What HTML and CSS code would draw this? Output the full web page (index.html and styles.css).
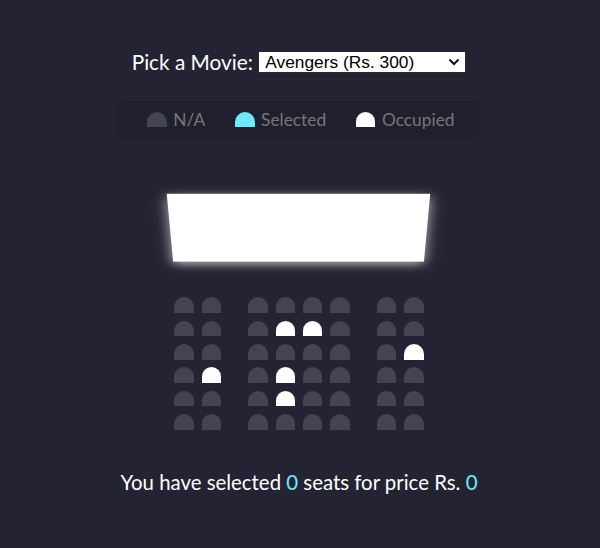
FILE: index.html
```html
<!DOCTYPE html>
<html lang="en">
<head>
<meta charset="UTF-8">
<title>Movie Seat Booking</title>
<link rel="stylesheet" href="styles.css">
</head>
<body>
  <div class="movie-container">
    <label for="movie">Pick a Movie:</label>
    <span class="select-wrap">
      <select id="movie">
        <option value="300">Avengers (Rs. 300)</option>
        <option value="250">Joker (Rs. 250)</option>
        <option value="200">Toy Story 4 (Rs. 200)</option>
        <option value="150">The Lion King (Rs. 150)</option>
      </select>
      <svg class="chevron" viewBox="0 0 10 7" aria-hidden="true"><path d="M1.2 1.2 L5 5 L8.8 1.2" fill="none" stroke="#111" stroke-width="2" stroke-linecap="square"/></svg>
    </span>
  </div>

  <ul class="showcase">
    <li><div class="seat"></div><small>N/A</small></li>
    <li><div class="seat selected"></div><small>Selected</small></li>
    <li><div class="seat occupied"></div><small>Occupied</small></li>
  </ul>

  <div class="container">
    <div class="screen"></div>
    <div class="row">
      <div class="seat"></div><div class="seat"></div><div class="seat"></div><div class="seat"></div>
      <div class="seat"></div><div class="seat"></div><div class="seat"></div><div class="seat"></div>
    </div>
    <div class="row">
      <div class="seat"></div><div class="seat"></div><div class="seat"></div><div class="seat occupied"></div>
      <div class="seat occupied"></div><div class="seat"></div><div class="seat"></div><div class="seat"></div>
    </div>
    <div class="row">
      <div class="seat"></div><div class="seat"></div><div class="seat"></div><div class="seat"></div>
      <div class="seat"></div><div class="seat"></div><div class="seat"></div><div class="seat occupied"></div>
    </div>
    <div class="row">
      <div class="seat"></div><div class="seat occupied"></div><div class="seat"></div><div class="seat occupied"></div>
      <div class="seat"></div><div class="seat"></div><div class="seat"></div><div class="seat"></div>
    </div>
    <div class="row">
      <div class="seat"></div><div class="seat"></div><div class="seat"></div><div class="seat occupied"></div>
      <div class="seat"></div><div class="seat"></div><div class="seat"></div><div class="seat"></div>
    </div>
    <div class="row">
      <div class="seat"></div><div class="seat"></div><div class="seat"></div><div class="seat"></div>
      <div class="seat"></div><div class="seat"></div><div class="seat"></div><div class="seat"></div>
    </div>
  </div>

  <p class="text">You have selected <span id="count">0</span> seats for price Rs. <span id="total">0</span></p>
</body>
</html>
```

FILE: styles.css
```css
* {
  box-sizing: border-box;
}

body {
  margin: 0;
  height: 548px;
  padding: 49px 2px 0 0;
  background-color: #242333;
  color: #fff;
  font-family: Lato, "Open Sans", sans-serif;
  display: flex;
  flex-direction: column;
  align-items: center;
}

.movie-container {
  display: flex;
  align-items: center;
  gap: 5.3px;
  height: 25px;
  font-size: 20.8px;
  line-height: 25px;
}

.select-wrap {
  position: relative;
  display: block;
  height: 22px;
}

.select-wrap select {
  appearance: none;
  -webkit-appearance: none;
  display: block;
  width: 208px;
  height: 22px;
  margin: 0;
  padding: 0 0 0 6px;
  border: 1px solid #2a2a2a;
  border-radius: 0;
  background-color: #fff;
  color: #000;
  font-family: "Liberation Sans", Arial, sans-serif;
  font-size: 17.33px;
}

.chevron {
  position: absolute;
  right: 7px;
  top: 8px;
  width: 10px;
  height: 7px;
  pointer-events: none;
}

.showcase {
  margin: 27px 0 0;
  padding: 7px 13px;
  list-style: none;
  display: flex;
  background: rgba(0, 0, 0, 0.1);
  border-radius: 6.5px;
  color: #777;
  font-size: 17.33px;
  line-height: 21px;
}

.showcase li {
  display: flex;
  align-items: center;
  margin: 0 13px;
}

.showcase small {
  font-size: inherit;
  margin-left: 2.6px;
}

.seat {
  width: 19.5px;
  height: 15.6px;
  margin: 3.9px;
  background-color: #444451;
  border-radius: 13px 13px 0 0;
}

.seat.selected {
  background-color: #6feaf6;
}

.seat.occupied {
  background-color: #fff;
}

.container {
  margin-top: 25px;
  perspective: 1300px;
}

.screen {
  width: 100%;
  height: 91px;
  margin: 19.5px 0;
  background-color: #fff;
  transform: rotateX(-45deg);
  box-shadow: 0 3.9px 13px rgba(255, 255, 255, 0.7);
}

.row {
  display: flex;
}

.row .seat:nth-child(2) {
  margin-right: 23.4px;
}

.row .seat:nth-last-child(2) {
  margin-left: 23.4px;
}

.text {
  margin: 36px 0 0;
  font-size: 20.4px;
  line-height: 25px;
}

.text span {
  color: #6feaf6;
}
```
